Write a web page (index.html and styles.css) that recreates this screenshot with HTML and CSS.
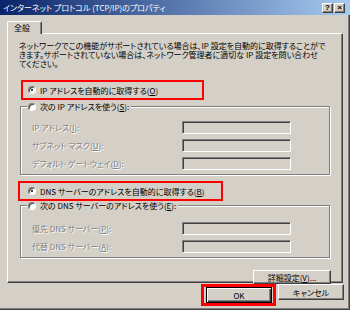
FILE: index.html
```html
<!DOCTYPE html>
<html lang="ja">
<head>
<meta charset="utf-8">
<link rel="stylesheet" href="styles.css">
</head>
<body>
<div class="window">
  <div class="titlebar">
    <span class="title">インターネット プロトコル (TCP/IP)のプロパティ</span>
    <div class="tbtns"><span class="tbtn">?</span><span class="tbtn">×</span></div>
  </div>
  <div class="tabs"><div class="tab">全般</div></div>
  <div class="panel">
    <p class="desc">ネットワークでこの機能がサポートされている場合は、IP 設定を自動的に取得することがで<br>きます。サポートされていない場合は、ネットワーク管理者に適切な IP 設定を問い合わせ<br>てください。</p>
    <div class="opt hl1"><span class="radio on"></span><span>IP アドレスを自動的に取得する(<u>O</u>)</span></div>
    <div class="group g1">
      <div class="caption"><span class="radio"></span><span>次の IP アドレスを使う(<u>S</u>):</span></div>
      <div class="fields">
        <span class="lbl">IP アドレス(<u>I</u>):</span><span class="field"></span>
        <span class="lbl">サブネット マスク(<u>U</u>):</span><span class="field"></span>
        <span class="lbl">デフォルト ゲートウェイ(<u>D</u>):</span><span class="field"></span>
      </div>
    </div>
    <div class="opt hl2"><span class="radio on"></span><span>DNS サーバーのアドレスを自動的に取得する(<u>B</u>)</span></div>
    <div class="group g2">
      <div class="caption"><span class="radio"></span><span>次の DNS サーバーのアドレスを使う(<u>E</u>):</span></div>
      <div class="fields">
        <span class="lbl">優先 DNS サーバー(<u>P</u>):</span><span class="field"></span>
        <span class="lbl">代替 DNS サーバー(<u>A</u>):</span><span class="field"></span>
      </div>
    </div>
    <div class="actions"><span class="btn adv">詳細設定(<u>V</u>)...</span></div>
  </div>
  <div class="footer">
    <div class="hl-ok"><span class="btn default">OK</span></div>
    <span class="btn">キャンセル</span>
  </div>
</div>
</body>
</html>
```
FILE: styles.css
```css
* { box-sizing: border-box; margin: 0; padding: 0; }
body {
  margin: 0;
  background: #D4D0C8;
  font-family: "Noto Sans CJK JP", "Noto Sans", sans-serif;
  font-size: 8px;
  color: #000;
  font-feature-settings: "palt";
}
.window {
  width: 350px;
  height: 310px;
  background: #D4D0C8;
  box-shadow: inset -1px -1px 0 #404040, inset -2px -2px 0 #808080;
}
.titlebar {
  height: 15px;
  background: linear-gradient(to right, #0A246A, #A6CAF0);
  display: flex;
  align-items: center;
  justify-content: space-between;
  padding: 0 5px 0 3px;
}
.title { color: #fff; line-height: 15px; white-space: nowrap; }
.tbtns { display: flex; gap: 1px; }
.tbtn {
  width: 11px; height: 10px;
  background: #D4D0C8;
  border: 1px solid;
  border-color: #fff #404040 #404040 #fff;
  box-shadow: inset -1px -1px 0 #808080;
  font: bold 8px "Liberation Sans", sans-serif;
  display: flex; align-items: center; justify-content: center;
  line-height: 1;
}
.tabs { padding: 6px 0 0 7px; }
.tab {
  position: relative;
  z-index: 1;
  width: 35px;
  height: 13px;
  margin-bottom: -1px;
  background: #D4D0C8;
  border: 1px solid;
  border-bottom: none;
  border-color: #fff #404040 transparent #fff;
  box-shadow: inset -1px 0 0 #808080;
  border-radius: 2px 2px 0 0;
  padding-left: 6px;
  line-height: 12px;
}
.panel {
  margin-left: 7px;
  width: 336px;
  height: 250px;
  border: 1px solid;
  border-color: #fff #404040 #404040 #fff;
  box-shadow: inset -1px -1px 0 #808080;
  padding-top: 7px;
}
.desc { margin-left: 11px; line-height: 9px; white-space: nowrap; }
.opt {
  display: flex;
  align-items: center;
  gap: 4px;
  height: 20px;
  border: 2px solid #f00;
  white-space: nowrap;
}
.hl1 { margin: 12px 0 0 13px; width: 183px; padding-left: 5px; }
.hl2 { margin: 6px 0 0 10px; width: 205px; padding-left: 8px; }
.radio {
  position: relative;
  flex: none;
  width: 8px; height: 8px;
  border-radius: 50%;
  background: #fff;
  border: 1px solid;
  border-color: #808080 #fff #fff #808080;
  box-shadow: inset 1px 1px 0 #404040;
}
.radio.on::after {
  content: "";
  position: absolute;
  left: 2px; top: 2px;
  width: 2px; height: 2px;
  border-radius: 50%;
  background: #000;
}
.group {
  margin-left: 12px;
  width: 310px;
  border: 1px solid #808080;
  box-shadow: inset 1px 1px 0 #fff, 1px 1px 0 #fff;
  padding-bottom: 4px;
}
.g1 { margin-top: 6px; }
.g2 { margin-top: 4px; }
.caption {
  display: inline-flex;
  align-items: center;
  gap: 4px;
  height: 9px;
  margin: -5px 0 0 6px;
  padding: 0 2px 0 1px;
  background: #D4D0C8;
  white-space: nowrap;
  vertical-align: top;
}
.fields {
  display: grid;
  grid-template-columns: 150px 109px;
  row-gap: 5px;
  align-items: center;
  margin-left: 11px;
}
.g1 .fields { margin-top: 3px; }
.g2 .fields { margin-top: 5px; }
.lbl {
  color: #808080;
  text-shadow: 1px 1px 0 #fff;
  white-space: nowrap;
  line-height: 13px;
}
.field {
  height: 13px;
  background: #D4D0C8;
  border: 1px solid;
  border-color: #808080 #fff #fff #808080;
  box-shadow: inset 1px 1px 0 #404040, inset -1px -1px 0 #D4D0C8;
}
.btn {
  display: flex;
  align-items: center;
  justify-content: center;
  background: #D4D0C8;
  border: 1px solid;
  border-color: #fff #404040 #404040 #fff;
  box-shadow: inset -1px -1px 0 #808080;
  white-space: nowrap;
  height: 16px;
  width: 66px;
}
.actions { display: flex; justify-content: flex-end; margin: 12px 11px 0 0; }
.adv { width: 78px; height: 14px; }
.footer {
  display: flex;
  justify-content: flex-end;
  align-items: flex-start;
  gap: 2px;
  margin-top: 1px;
  padding-right: 6px;
}
.hl-ok { border: 3px solid #f00; padding: 0 1px 0 2px; }
.btn.default {
  border: 1px solid #000;
  box-shadow: inset 1px 1px 0 #fff, inset -1px -1px 0 #404040, inset -2px -2px 0 #808080;
}
```
